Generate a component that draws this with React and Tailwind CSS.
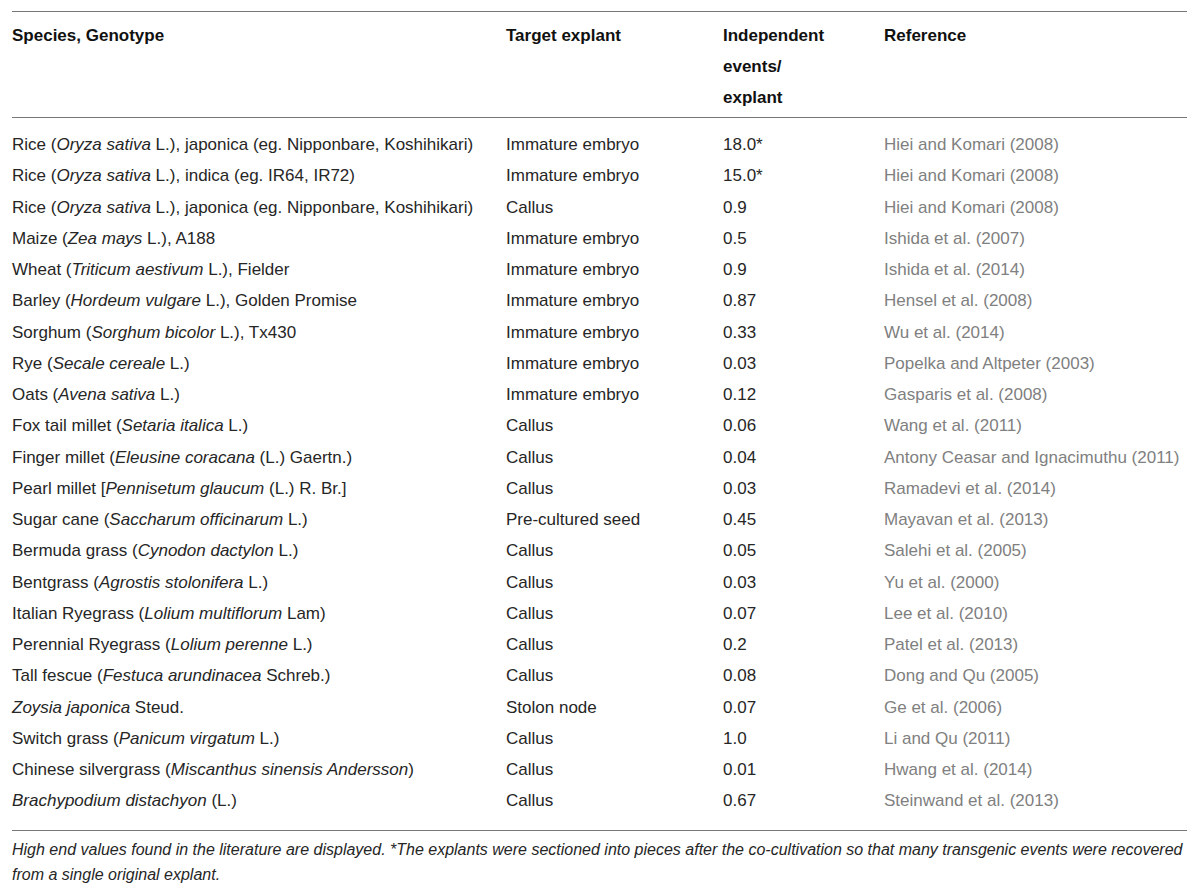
const rows = [
  [<>Rice (<i>Oryza sativa</i> L.), japonica (eg. Nipponbare, Koshihikari)</>, "Immature embryo", "18.0*", "Hiei and Komari (2008)"],
  [<>Rice (<i>Oryza sativa</i> L.), indica (eg. IR64, IR72)</>, "Immature embryo", "15.0*", "Hiei and Komari (2008)"],
  [<>Rice (<i>Oryza sativa</i> L.), japonica (eg. Nipponbare, Koshihikari)</>, "Callus", "0.9", "Hiei and Komari (2008)"],
  [<>Maize (<i>Zea mays</i> L.), A188</>, "Immature embryo", "0.5", "Ishida et al. (2007)"],
  [<>Wheat (<i>Triticum aestivum</i> L.), Fielder</>, "Immature embryo", "0.9", "Ishida et al. (2014)"],
  [<>Barley (<i>Hordeum vulgare</i> L.), Golden Promise</>, "Immature embryo", "0.87", "Hensel et al. (2008)"],
  [<>Sorghum (<i>Sorghum bicolor</i> L.), Tx430</>, "Immature embryo", "0.33", "Wu et al. (2014)"],
  [<>Rye (<i>Secale cereale</i> L.)</>, "Immature embryo", "0.03", "Popelka and Altpeter (2003)"],
  [<>Oats (<i>Avena sativa</i> L.)</>, "Immature embryo", "0.12", "Gasparis et al. (2008)"],
  [<>Fox tail millet (<i>Setaria italica</i> L.)</>, "Callus", "0.06", "Wang et al. (2011)"],
  [<>Finger millet (<i>Eleusine coracana</i> (L.) Gaertn.)</>, "Callus", "0.04", "Antony Ceasar and Ignacimuthu (2011)"],
  [<>Pearl millet [<i>Pennisetum glaucum</i> (L.) R. Br.]</>, "Callus", "0.03", "Ramadevi et al. (2014)"],
  [<>Sugar cane (<i>Saccharum officinarum</i> L.)</>, "Pre-cultured seed", "0.45", "Mayavan et al. (2013)"],
  [<>Bermuda grass (<i>Cynodon dactylon</i> L.)</>, "Callus", "0.05", "Salehi et al. (2005)"],
  [<>Bentgrass (<i>Agrostis stolonifera</i> L.)</>, "Callus", "0.03", "Yu et al. (2000)"],
  [<>Italian Ryegrass (<i>Lolium multiflorum</i> Lam)</>, "Callus", "0.07", "Lee et al. (2010)"],
  [<>Perennial Ryegrass (<i>Lolium perenne</i> L.)</>, "Callus", "0.2", "Patel et al. (2013)"],
  [<>Tall fescue (<i>Festuca arundinacea</i> Schreb.)</>, "Callus", "0.08", "Dong and Qu (2005)"],
  [<><i>Zoysia japonica</i> Steud.</>, "Stolon node", "0.07", "Ge et al. (2006)"],
  [<>Switch grass (<i>Panicum virgatum</i> L.)</>, "Callus", "1.0", "Li and Qu (2011)"],
  [<>Chinese silvergrass (<i>Miscanthus sinensis Andersson</i>)</>, "Callus", "0.01", "Hwang et al. (2014)"],
  [<><i>Brachypodium distachyon</i> (L.)</>, "Callus", "0.67", "Steinwand et al. (2013)"],
];

const cols = "grid grid-cols-[494px_217px_161px_1fr]";

export default function App() {
  return (
    <div className="bg-white min-h-[889px] px-[12px] pt-[11px] text-[#262626] font-['Liberation_Sans',Arial,sans-serif]">
      <div className="w-[1175px] border-t-[1.5px] border-[#777]">
        <div className={`${cols} border-b-[1.5px] border-[#777] pt-[8px] pb-[4px] text-[17px] leading-[31px] font-bold text-[#111]`}>
          <div>Species, Genotype</div>
          <div>Target explant</div>
          <div>Independent<br />events/<br />explant</div>
          <div>Reference</div>
        </div>
        <div className="pt-[11px] pb-[13px] border-b-[1.5px] border-[#777] text-[17px] leading-[31.25px]">
          {rows.map((r, i) => (
            <div key={i} className={cols}>
              <div className="whitespace-nowrap">{r[0]}</div>
              <div>{r[1]}</div>
              <div>{r[2]}</div>
              <div className="text-[#808080] whitespace-nowrap">{r[3]}</div>
            </div>
          ))}
        </div>
      </div>
      <p className="w-[1175px] pt-[6px] text-[16px] leading-[25px] italic text-[#262626]">
        High end values found in the literature are displayed. *The explants were sectioned into pieces after the co-cultivation so that many transgenic events were recovered from a single original explant.
      </p>
    </div>
  );
}
